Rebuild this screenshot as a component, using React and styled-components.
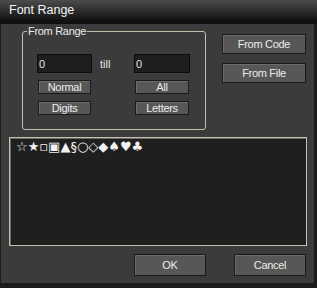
import React, { useState } from "react";
import styled, { createGlobalStyle } from "styled-components";

const Global = createGlobalStyle`
  html, body {
    margin: 0;
    padding: 0;
    background: #1a1a1a;
  }
  body {
    font-family: "Liberation Sans", Arial, sans-serif;
  }
`;

const Window = styled.div`
  width: 317px;
  height: 288px;
  display: flex;
  flex-direction: column;
  background: #1c1c1c;
  overflow: hidden;
`;

const TitleBar = styled.div`
  height: 24px;
  box-sizing: border-box;
  padding: 3px 9px;
  line-height: 14px;
  font-size: 12.5px;
  color: #f4f4f4;
  background: linear-gradient(#4c4c4c 0%, #262626 55%, #121212 85%, #0e0e0e 100%);
`;

const Body = styled.div`
  width: 313px;
  height: 259px;
  margin-left: 1px;
  box-sizing: border-box;
  padding: 7px 0 0 8px;
  background: #3b3b3b;
  display: flex;
  flex-direction: column;
`;

const TopRow = styled.div`
  display: flex;
  align-items: flex-start;
  padding-left: 13px;
  gap: 16px;
`;

const Group = styled.div`
  position: relative;
  width: 184px;
  height: 99px;
  box-sizing: border-box;
  border: 1px solid #c4c0ae;
  border-radius: 3px;
  padding: 22px 15px 0 14px;
  display: grid;
  grid-template-columns: 55px 1fr 56px;
  grid-template-rows: 19px 14px 14px;
  row-gap: 7px;
  align-items: center;
`;

const Legend = styled.span`
  position: absolute;
  top: -7px;
  left: 4px;
  padding: 0 1px;
  background: #3b3b3b;
  color: #ececec;
  font-size: 11px;
  letter-spacing: -0.3px;
  line-height: 13px;
`;

const Field = styled.input`
  width: 100%;
  height: 19px;
  box-sizing: border-box;
  border: 1px solid #0c0c0c;
  background: #1e1e1e;
  color: #e0e0e0;
  font-family: "Liberation Sans", Arial, sans-serif;
  font-size: 11px;
  padding: 0 1px;
  outline: none;
`;

const Till = styled.span`
  color: #e6e6e6;
  font-size: 11px;
  padding-left: 8px;
`;

const Button = styled.button`
  width: ${(p) => p.$w}px;
  height: ${(p) => p.$h}px;
  margin-left: ${(p) => p.$ml || 0}px;
  box-sizing: border-box;
  padding: 0;
  border: 1px solid #1a1a1a;
  box-shadow: inset 1px 1px #6c6c6c;
  background: #575757;
  color: #ececec;
  font-family: "Liberation Sans", Arial, sans-serif;
  font-size: 11px;
  letter-spacing: -0.3px;
  line-height: 12px;
  cursor: default;
`;

const SideColumn = styled.div`
  display: flex;
  flex-direction: column;
  gap: 9px;
  margin-top: 3px;
`;

const ListBox = styled.div`
  width: 298px;
  height: 109px;
  margin-top: 7px;
  box-sizing: border-box;
  border: 1px solid #c4c0ae;
  box-shadow: inset 1px 1px #6c6a62;
  background: #1f1f1f;
  padding: 1px 6px;
  color: #f2f2f2;
  font-family: "DejaVu Sans", sans-serif;
  font-size: 13px;
  line-height: 16px;
`;

const Footer = styled.div`
  display: flex;
  justify-content: flex-end;
  gap: 28px;
  padding-right: 8px;
  margin-top: 8px;
`;

const symbols = "☆★▫▣▲§○◇◆♠♥♣";

export default function App() {
  const [from, setFrom] = useState("0");
  const [till, setTill] = useState("0");

  return (
    <>
      <Global />
      <Window>
        <TitleBar>Font Range</TitleBar>
        <Body>
          <TopRow>
            <Group>
              <Legend>From Range</Legend>
              <Field value={from} onChange={(e) => setFrom(e.target.value)} />
              <Till>till</Till>
              <Field value={till} onChange={(e) => setTill(e.target.value)} />
              <Button $w={53} $h={14} $ml={1}>Normal</Button>
              <span />
              <Button $w={54} $h={14} $ml={1}>All</Button>
              <Button $w={53} $h={14} $ml={1}>Digits</Button>
              <span />
              <Button $w={54} $h={14} $ml={1}>Letters</Button>
            </Group>
            <SideColumn>
              <Button $w={84} $h={20}>From Code</Button>
              <Button $w={84} $h={20}>From File</Button>
            </SideColumn>
          </TopRow>
          <ListBox>{symbols}</ListBox>
          <Footer>
            <Button $w={72} $h={22}>OK</Button>
            <Button $w={72} $h={22}>Cancel</Button>
          </Footer>
        </Body>
      </Window>
    </>
  );
}
